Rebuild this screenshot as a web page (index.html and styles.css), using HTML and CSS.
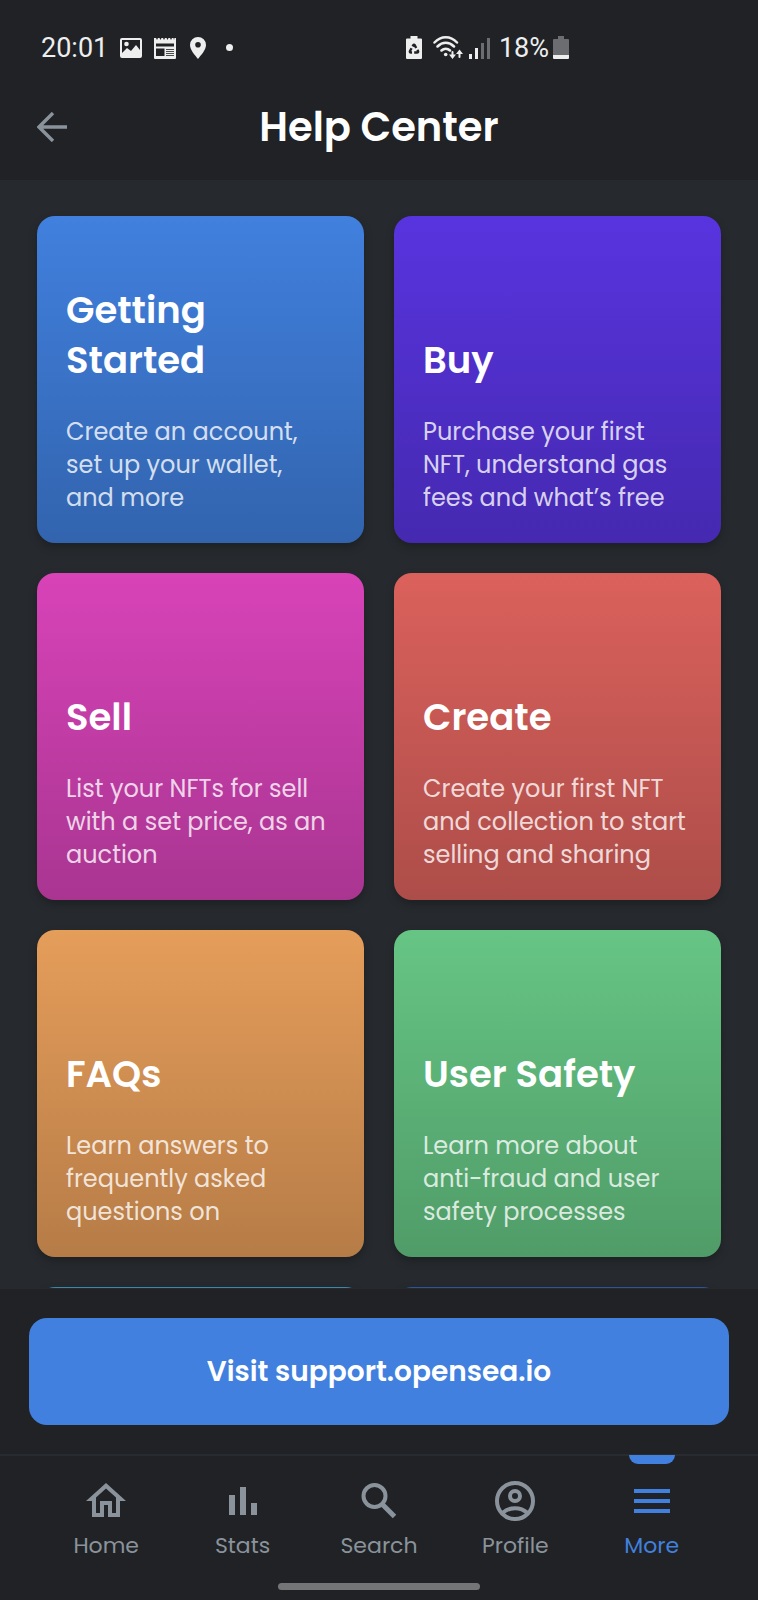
FILE: index.html
```html
<!DOCTYPE html>
<html lang="en">
<head>
  <meta charset="UTF-8" />
  <meta name="viewport" content="width=device-width, initial-scale=1.0" />
  <title>Help Center</title>
  <link rel="stylesheet" href="styles.css">
</head>
<body>
  <div class="app">
    <header class="header">
      <div class="status">
        <div class="status-left">
          <span>20:01</span>
          <svg width="22" height="22" viewBox="0 0 22 22" fill="#eee"><path fill-rule="evenodd" d="M2 1h18a2 2 0 0 1 2 2v16a2 2 0 0 1-2 2H2a2 2 0 0 1-2-2V3a2 2 0 0 1 2-2zM2 3v13l5-5 4 3 5-6 4 5V3z"/><circle cx="6.500" cy="7" r="2.300"/></svg>
          <svg width="22" height="22" viewBox="0 0 22 22" fill="#eee"><path fill-rule="evenodd" d="M0 1h2l1 2 1-2 1.500 0 1 2 1-2h1.500l1 2 1-2h1.500l1 2 1-2H16l1 2 1-2h1.500l.5 2 .5-2H22v20a1 1 0 0 1-1 1H1a1 1 0 0 1-1-1zM2 6.500v3h18v-3zM2 11.500v7.500h8.500v-7.500z"/><path d="M12 12.500h8M12 14.500h8M12 16.500h8M12 18.500h8" stroke="#202225" stroke-width=".8"/></svg>
          <svg class="pin" width="16" height="22" viewBox="0 0 16 22" fill="#eee"><path fill-rule="evenodd" d="M8 0a8 8 0 0 1 8 8c0 5-5 10-8 14C5 18 0 13 0 8a8 8 0 0 1 8-8zm0 5a2.800 2.800 0 1 0 0 5.600A2.800 2.800 0 0 0 8 5z"/></svg>
          <span class="dot"></span>
        </div>
        <div class="status-right">
          <svg class="saver" width="16" height="23" viewBox="0 0 16 23" fill="#eee"><path d="M4.500 0h7v2.500H15a1 1 0 0 1 1 1V22a1 1 0 0 1-1 1H1a1 1 0 0 1-1-1V3.500a1 1 0 0 1 1-1h3.500z"/><path d="M10.200 12 8.700 9.200Q8 8 7.300 9.200L4 15q-.6 1.500 1 1.500h6q1.600 0 1-1.500z" fill="none" stroke="#202225" stroke-width="2.400" pathLength="30" stroke-dasharray="7.500 2.500"/></svg>
          <svg width="30" height="24" viewBox="0 0 30 24" fill="none" stroke="#eee" stroke-width="2.500" stroke-linecap="round"><path d="M1.500 6.500C8-.5 17.500-.5 24 6.500M4.500 10.500c5-5 11.500-5 16.500 0M8.500 14.500c2.500-2.500 6-2.500 8.500 0"/><circle cx="12.700" cy="18.500" r="1.800" fill="#eee" stroke="none"/><path d="M19.500 16v4M26.500 21v-4" stroke-width="2"/><path d="M16 18.500h7l-3.500 4.500zM23 18h7l-3.500-4.500z" fill="#eee" stroke="none"/></svg>
          <svg class="signal" width="21" height="22" viewBox="0 0 21 22"><path d="M1.500 22v-5M7.500 22V11" stroke="#eee" stroke-width="3"/><path d="M13.500 22V6M19.500 22V1" stroke="#6c6d70" stroke-width="3"/></svg>
          <span class="battery-text">18%</span>
          <svg width="16" height="23" viewBox="0 0 16 23"><path d="M5 0h6v3h4a1 1 0 0 1 1 1v15H0V4a1 1 0 0 1 1-1h4z" fill="#6c6d70"/><path d="M0 19h16v3a1 1 0 0 1-1 1H1a1 1 0 0 1-1-1z" fill="#eee"/></svg>
        </div>
      </div>
      <div class="topbar">
        <a class="back" href="#" aria-label="Back">
          <svg width="30" height="30" viewBox="0 0 30 30" fill="none" stroke="#8a939b" stroke-width="3.400"><path d="M30 15H3M16 1 2 15l14 14"/></svg>
        </a>
        <h1>Help Center</h1>
      </div>
    </header>

    <main class="cards">
      <a class="card started" href="#">
        <h2>Getting<br>Started</h2>
        <p>Create an account,<br>set up your wallet,<br>and more</p>
      </a>
      <a class="card buy" href="#">
        <h2>Buy</h2>
        <p>Purchase your first<br>NFT, understand gas<br>fees and what’s free</p>
      </a>
      <a class="card sell" href="#">
        <h2>Sell</h2>
        <p>List your NFTs for sell<br>with a set price, as an<br>auction</p>
      </a>
      <a class="card create" href="#">
        <h2>Create</h2>
        <p>Create your first NFT<br>and collection to start<br>selling and sharing</p>
      </a>
      <a class="card faqs" href="#">
        <h2>FAQs</h2>
        <p>Learn answers to<br>frequently asked<br>questions on</p>
      </a>
      <a class="card safety" href="#">
        <h2>User Safety</h2>
        <p>Learn more about<br>anti-fraud and user<br>safety processes</p>
      </a>
      <div class="card partners"></div>
      <div class="card developers"></div>
    </main>

    <div class="support">
      <button type="button">Visit support.opensea.io</button>
    </div>

    <nav class="tabs">
      <a href="#">
        <svg width="40" height="40" viewBox="2 2 20 20" fill="currentColor"><path d="m12 5.690 5 4.500V18h-2v-6H9v6H7v-7.810l5-4.500M12 3 2 12h3v8h6v-6h2v6h6v-8h3L12 3z"/></svg>
        <span>Home</span>
      </a>
      <a href="#">
        <svg width="40" height="40" viewBox="0 0 40 40" fill="currentColor"><path d="M6 14h6v20H6zM17 6h6v28h-6zM28 22h6v12h-6z"/></svg>
        <span>Stats</span>
      </a>
      <a href="#">
        <svg width="40" height="40" viewBox="0 0 40 40" fill="none" stroke="currentColor"><circle cx="15.500" cy="15" r="11" stroke-width="4"/><path d="m24 24 11.500 11.500" stroke-width="5"/></svg>
        <span>Search</span>
      </a>
      <a href="#">
        <svg width="40" height="40" viewBox="0 0 40 40" fill="none" stroke="currentColor" stroke-width="4"><circle cx="20" cy="20" r="18"/><circle cx="20" cy="15" r="5"/><path d="M7.500 32c7-6.500 18-6.500 25 0"/></svg>
        <span>Profile</span>
      </a>
      <a class="active" href="#">
        <svg width="40" height="40" viewBox="0 0 40 40" fill="currentColor"><path d="M2 8h36v4H2zM2 18h36v4H2zM2 28h36v4H2z"/></svg>
        <span>More</span>
      </a>
    </nav>
    <div class="home-bar"></div>
  </div>
</body>
</html>
```

FILE: styles.css
```css
* {
  box-sizing: border-box;
}
body {
  margin: 0;
  background: #202225;
  color: white;
  font-family: Poppins, Inter, sans-serif;
}
a {
  color: inherit;
  text-decoration: none;
}
svg {
  display: block;
  flex-shrink: 0;
}
h1, h2, p {
  margin: 0;
}
.app {
  display: flex;
  flex-direction: column;
  height: 100vh;
  overflow: hidden;
}

/* status bar + title */
.header {
  flex-shrink: 0;
}
.status {
  display: flex;
  justify-content: space-between;
  height: 74px;
  padding: 21px 189px 0 41px;
  font-family: Roboto, sans-serif;
  font-size: 27px;
  color: #eee;
}
.status-left, .status-right {
  display: flex;
  align-items: center;
  gap: 12px;
}
.status-right {
  gap: 6px;
}
.pin {
  margin: 0 8px 0 2px;
}
.dot {
  width: 7px;
  height: 7px;
  border-radius: 50%;
  background: #eee;
}
.saver {
  margin-right: 5px;
}
.signal {
  margin-right: 3px;
}
.battery-text {
  margin-right: -2px;
}
.topbar {
  display: grid;
  grid-template-columns: 1fr auto 1fr;
  align-items: center;
  height: 106px;
  padding: 0 37px;
}
.back {
  justify-self: start;
}
h1 {
  font-size: 40px;
  font-weight: 600;
}

/* cards */
.cards {
  flex: 1;
  min-height: 0;
  overflow: hidden;
  display: grid;
  grid-template-columns: repeat(2, minmax(0, 1fr));
  align-content: start;
  gap: 30px;
  padding: 36px 37px 0;
  background: #262a2e;
}
.card {
  aspect-ratio: 1;
  display: flex;
  flex-direction: column;
  justify-content: flex-end;
  gap: 30px;
  padding: 29px;
  border-radius: 18px;
  box-shadow: 0 4px 8px rgba(0, 0, 0, 0.25);
}
.card h2 {
  font-size: 37px;
  line-height: 50px;
  font-weight: 600;
}
.card p {
  font-size: 24px;
  line-height: 33px;
  color: rgba(255, 255, 255, 0.8);
  white-space: nowrap;
}
.started {
  background: linear-gradient(#4180de, #3264ae);
}
.buy {
  background: linear-gradient(#5834df, #4529b0);
}
.sell {
  background: linear-gradient(#d843b8, #a93591);
}
.create {
  background: linear-gradient(#db615c, #ad4d49);
}
.faqs {
  background: linear-gradient(#e59d5a, #b67c47);
}
.safety {
  background: linear-gradient(#66c584, #509c68);
}
.partners {
  background: #3d87a8;
}
.developers {
  background: #2e5694;
}

/* support button */
.support {
  flex-shrink: 0;
  padding: 29px;
  border-top: 1px solid #262a2e;
  border-bottom: 2px solid #282b2f;
}
.support button {
  width: 100%;
  height: 107px;
  border: 0;
  border-radius: 18px;
  background: #4180de;
  color: white;
  font-family: inherit;
  font-size: 28px;
  font-weight: 600;
}

/* bottom tabs */
.tabs {
  flex-shrink: 0;
  display: grid;
  grid-template-columns: repeat(5, 1fr);
  padding: 0 38px;
  color: #8a939b;
}
.tabs a {
  position: relative;
  display: flex;
  flex-direction: column;
  align-items: center;
  gap: 8px;
  padding-top: 25px;
  font-size: 22px;
  line-height: 34px;
}
.tabs .active {
  color: #4180de;
}
.tabs .active::before {
  content: "";
  position: absolute;
  top: -1px;
  width: 46px;
  height: 9px;
  border-radius: 0 0 9px 9px;
  background: #4180de;
}
.home-bar {
  flex-shrink: 0;
  width: 202px;
  height: 7px;
  margin: 20px auto 10px;
  border-radius: 4px;
  background: #747576;
}
```
